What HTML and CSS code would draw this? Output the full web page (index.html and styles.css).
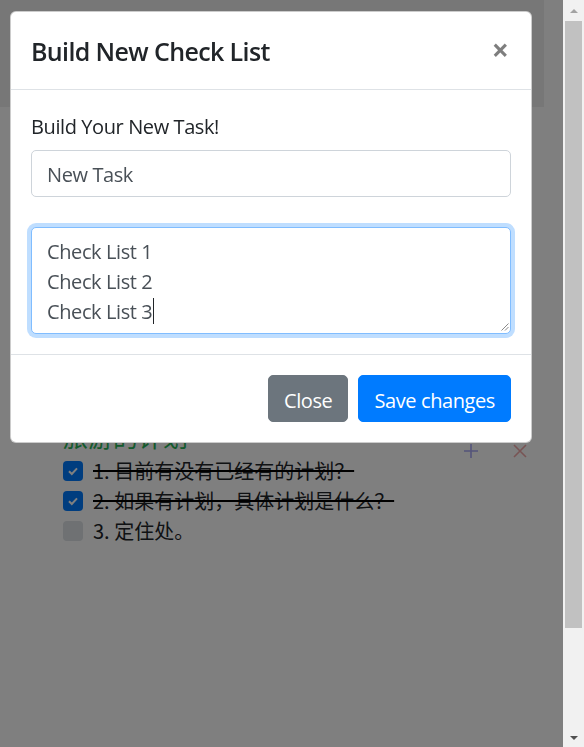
FILE: index.html
```html
<!DOCTYPE html>
<html lang="zh">
<head>
<meta charset="utf-8">
<title>Check List</title>
<link rel="stylesheet" href="styles.css">
</head>
<body>
<div class="page">
  <div class="hero"></div>
  <main class="board">
    <section class="plan">
      <div class="plan-head">
        <h5 class="plan-title">旅游的计划</h5>
        <div class="plan-actions">
          <span class="icon-btn add"><svg viewBox="0 0 14 14"><path d="M7 0V14M0 7H14"/></svg></span>
          <span class="icon-btn remove"><svg viewBox="0 0 14 14"><path d="M1 1L13 13M13 1L1 13"/></svg></span>
        </div>
      </div>
      <ul class="checks">
        <li class="check done"><span class="box"><svg viewBox="0 0 20 20"><path d="M6 10.3l2.8 2.7L14 7.3"/></svg></span><span class="text">1. 目前有没有已经有的计划？</span></li>
        <li class="check done"><span class="box"><svg viewBox="0 0 20 20"><path d="M6 10.3l2.8 2.7L14 7.3"/></svg></span><span class="text">2. 如果有计划，具体计划是什么？</span></li>
        <li class="check"><span class="box"></span><span class="text">3. 定住处。</span></li>
      </ul>
    </section>
  </main>
</div>

<div class="backdrop"></div>

<div class="modal">
  <div class="modal-header">
    <h5 class="modal-title">Build New Check List</h5>
    <button class="close" type="button">×</button>
  </div>
  <div class="modal-body">
    <label class="field-label" for="task">Build Your New Task!</label>
    <input class="form-control" id="task" type="text" value="New Task">
    <div class="form-control textarea">Check List 1<br>Check List 2<br>Check List 3<span class="caret"></span><svg class="grip" viewBox="0 0 9 9"><path d="M8.5 1.5L1.5 8.5M8.5 5L5 8.5"/></svg></div>
  </div>
  <div class="modal-footer">
    <button class="btn btn-secondary" type="button">Close</button>
    <button class="btn btn-primary" type="button">Save changes</button>
  </div>
</div>

<div class="scrollbar">
  <span class="arrow up"></span>
  <span class="thumb"></span>
  <span class="spacer"></span>
  <span class="arrow down"></span>
</div>
</body>
</html>
```

FILE: styles.css
```css
html, body {
  margin: 0;
  height: 100%;
  overflow: hidden;
}
body {
  font-family: "Open Sans", "Noto Sans CJK SC", sans-serif;
  font-size: 20px;
  line-height: 1.5;
  color: #212529;
  background: #fff;
}

/* page behind the modal */
.page { width: 563px; }
.hero { width: 544px; height: 107px; background: #eeeeee; }
.board { padding: 314px 36px 0 63px; }
.plan-head { display: flex; align-items: flex-start; height: 30px; margin-bottom: 5px; }
.plan-title {
  flex: 1;
  margin: 0;
  font: 400 25px/30px "Noto Sans CJK SC", sans-serif;
  color: #2bb55a;
}
.plan-actions { display: flex; gap: 35px; margin-top: 23px; }
.icon-btn svg { display: block; width: 14px; height: 14px; fill: none; stroke-width: 1.6; }
.add svg { stroke: #a8a8f4; }
.remove svg { stroke: #f0a8a8; }

.checks {
  list-style: none;
  margin: 0;
  padding: 0;
  font-family: "Noto Sans CJK SC", sans-serif;
}
.check { display: flex; align-items: flex-start; gap: 10px; height: 30px; line-height: 30px; }
.box {
  width: 20px;
  height: 20px;
  margin-top: 5px;
  border-radius: 4px;
  background: #dee2e6;
}
.box svg { display: block; width: 20px; height: 20px; fill: none; stroke: #fff; stroke-width: 2; }
.done .box { background: #007bff; }
.done .text { text-decoration: line-through; text-decoration-color: #000; }

/* backdrop + modal */
.backdrop {
  position: fixed;
  left: 0;
  top: 0;
  width: 563px;
  height: 100%;
  background: rgba(0, 0, 0, 0.5);
}
.modal {
  position: fixed;
  top: 11px;
  left: 10px;
  width: 522px;
  box-sizing: border-box;
  background: #fff;
  border: 1px solid rgba(0, 0, 0, 0.2);
  border-radius: 6px;
}
.modal-header {
  display: flex;
  align-items: flex-start;
  justify-content: space-between;
  padding: 21px 20px 19px;
  border-bottom: 1px solid #dee2e6;
}
.modal-title {
  margin: 0;
  font-size: 25px;
  font-weight: 600;
  line-height: 37px;
  letter-spacing: -0.025em;
}
.close {
  margin: 2px 2px 0 0;
  padding: 0;
  background: none;
  border: 0;
  font: 700 30px/1 "Open Sans", sans-serif;
  color: #000;
  opacity: 0.5;
  text-shadow: 0 1px 0 #fff;
}
.modal-body { padding: 20px; }
.field-label {
  display: block;
  padding-top: 2px;
  margin-bottom: 8px;
  letter-spacing: -0.02em;
}
.form-control {
  display: block;
  width: 100%;
  height: 47px;
  box-sizing: border-box;
  margin: 0;
  padding: 8.5px 15px 6.5px;
  font: 20px/30px "Open Sans", sans-serif;
  letter-spacing: -0.02em;
  color: #495057;
  background: #fff;
  border: 1px solid #ced4da;
  border-radius: 5px;
}
.textarea {
  position: relative;
  margin-top: 30px;
  height: 107px;
  padding-top: 9px;
  padding-bottom: 6px;
  border-color: #80bdff;
  box-shadow: 0 0 0 4px rgba(0, 123, 255, 0.25);
}
.caret {
  display: inline-block;
  width: 1px;
  height: 26px;
  margin-left: 1px;
  vertical-align: -5px;
  background: #212529;
}
.grip {
  position: absolute;
  right: 1px;
  bottom: 2px;
  width: 9px;
  height: 9px;
  fill: none;
  stroke: #8a8a8a;
  stroke-width: 1;
}
.modal-footer {
  display: flex;
  justify-content: flex-end;
  gap: 10px;
  padding: 20px;
  border-top: 1px solid #dee2e6;
}
.btn {
  padding: 9.5px 15px 5.5px;
  font: 20px/30px "Open Sans", sans-serif;
  letter-spacing: -0.02em;
  color: #fff;
  border: 1px solid transparent;
  border-radius: 5px;
}
.btn-secondary { background: #6c757d; border-color: #6c757d; }
.btn-primary { background: #007bff; border-color: #007bff; }

/* window scrollbar */
.scrollbar {
  position: fixed;
  top: 0;
  right: 0;
  width: 21px;
  height: 100%;
  background: #f1f1f1;
  display: flex;
  flex-direction: column;
  align-items: center;
}
.arrow { width: 0; height: 0; border-left: 4px solid transparent; border-right: 4px solid transparent; }
.arrow.up { margin-top: 9px; border-bottom: 4px solid #a3a3a3; }
.thumb { width: 17px; height: 607px; margin-top: 8px; background: #c1c1c1; }
.spacer { flex: 1; }
.arrow.down { margin-bottom: 7px; border-top: 4px solid #505050; }
```
